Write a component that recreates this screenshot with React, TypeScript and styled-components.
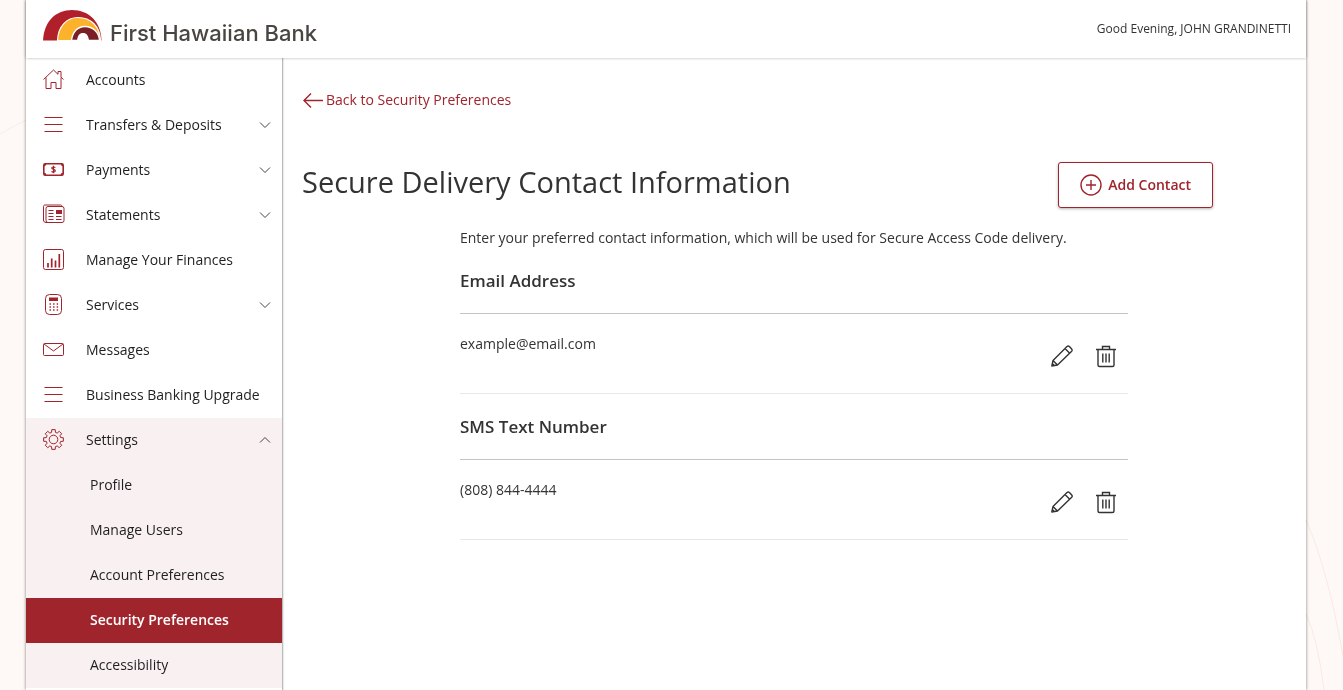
import React from "react";
import styled, { createGlobalStyle } from "styled-components";

const RED = "#a0242c";

const GlobalStyle = createGlobalStyle`
  *, *::before, *::after { box-sizing: border-box; }
  html, body, #root { height: 100%; }
  body {
    margin: 0;
    overflow: hidden;
    background: #fef9f6;
    color: #333;
    font-family: "Open Sans", "Noto Sans", sans-serif;
    font-size: 14px;
    line-height: 20px;
  }
  h1, h2, p, ul { margin: 0; padding: 0; }
  ul { list-style: none; }
  button { font: inherit; color: inherit; background: none; border: 0; padding: 0; cursor: pointer; }
  a { color: inherit; text-decoration: none; }
  svg { display: block; flex: none; }
`;

const Backdrop = styled.svg`
  position: fixed;
  bottom: 0;
  right: 0;
  z-index: -1;
`;

const BackdropLeft = styled(Backdrop)`
  top: 0;
  bottom: auto;
  left: 0;
  right: auto;
`;

const Page = styled.div`
  min-height: 100%;
  padding: 0 37px 0 26px;
  display: flex;
  justify-content: center;
`;

const Shell = styled.div`
  flex: 1;
  max-width: 1280px;
  min-height: 100vh;
  display: flex;
  flex-direction: column;
  background: #fff;
  box-shadow: 0 0 3px rgba(0, 0, 0, 0.5);
`;

const Header = styled.header`
  position: relative;
  height: 58px;
  padding: 0 15px 0 16px;
  display: flex;
  justify-content: space-between;
  align-items: center;
  background: #fff;
  box-shadow: 0 0 3px rgba(0, 0, 0, 0.3);
`;

const Brand = styled.a`
  padding-bottom: 8px;
  display: flex;
  align-items: center;
  gap: 6px;
  color: #4a4541;
  font: 500 22px/28px Inter, sans-serif;
`;

const BrandName = styled.span`
  padding-top: 16px;
`;

const Greeting = styled.span`
  font-size: 12px;
`;

const Body = styled.div`
  flex: 1;
  display: flex;
`;

const Sidebar = styled.nav`
  width: 257px;
  flex: none;
  border-right: 1px solid #bbb;
  box-shadow: 1px 0 1px rgba(0, 0, 0, 0.08);
  color: #1f1f1f;
`;

const SettingsGroup = styled.li`
  background: #f9f0f2;
`;

const NavLink = styled.a`
  height: 45px;
  padding: 0 9px 2px 16px;
  display: grid;
  grid-template-columns: 24px 1fr 16px;
  column-gap: 20px;
  align-items: center;
  white-space: nowrap;
`;

const NavText = styled.span`
  grid-column: 2 / 3;
`;

const SubLink = styled.a<{ $active?: boolean }>`
  height: 45px;
  padding: 0 0 2px 64px;
  display: flex;
  align-items: center;
  background: ${(p) => (p.$active ? RED : "transparent")};
  color: ${(p) => (p.$active ? "#fff" : "inherit")};
  font-weight: ${(p) => (p.$active ? 600 : 400)};
`;

const Main = styled.main`
  flex: 1;
  padding: 32px 20px 40px 19px;
`;

const BackLink = styled.a`
  display: flex;
  width: fit-content;
  align-items: center;
  gap: 2px;
  color: ${RED};
`;

const TitleRow = styled.div`
  margin: 52px 73px 20px 0;
  display: flex;
  justify-content: space-between;
  align-items: flex-start;
`;

const Title = styled.h1`
  font-size: 29px;
  line-height: 40px;
  font-weight: 400;
`;

const AddButton = styled.button`
  height: 46px;
  padding: 0 21px;
  display: flex;
  align-items: center;
  gap: 6px;
  border: 1px solid ${RED};
  border-radius: 3px;
  background: #fff;
  box-shadow: 0 1px 3px rgba(0, 0, 0, 0.3);
  color: ${RED};
  font-weight: 600;
`;

const Contacts = styled.div`
  max-width: 668px;
  margin: 0 auto;
`;

const SectionTitle = styled.h2`
  height: 66px;
  display: flex;
  align-items: center;
  border-bottom: 1px solid #c4c4c4;
  font-size: 17px;
  font-weight: 600;
`;

const ContactRow = styled.div`
  height: 80px;
  padding: 20px 10px 0 0;
  display: flex;
  justify-content: space-between;
  align-items: flex-start;
  border-bottom: 1px solid #e8e8e8;
`;

const Actions = styled.div`
  padding-top: 10px;
  display: flex;
  gap: 20px;
`;

type IconName =
  | "home" | "menu" | "payments" | "statements" | "finances"
  | "services" | "messages" | "settings";

const gearPath = (() => {
  const pts: string[] = [];
  const at = (r: number, deg: number) => {
    const a = (deg * Math.PI) / 180;
    return `${(11.5 + r * Math.cos(a)).toFixed(2)} ${(11.5 + r * Math.sin(a)).toFixed(2)}`;
  };
  for (let i = 0; i < 8; i++) {
    const c = i * 45 - 90;
    pts.push(at(7.4, c - 15), at(10, c - 10), at(10, c + 10), at(7.4, c + 15));
  }
  return `M${pts.join("L")}Z`;
})();

const drawings: Record<IconName, React.ReactNode> = {
  home: (
    <path d="M1.500 11.500 11.500 2l4.500 4.300V3.500h3v5.600l2.500 2.400M4 9.500V20.500h5v-6h5v6h5V9.500" />
  ),
  menu: <path d="M2.500 4.500h18M2.500 11.500h18M2.500 18.500h18" strokeWidth="1.200" />,
  payments: (
    <>
      <rect x="1.800" y="5.800" width="19.400" height="11.400" rx="1.500" strokeWidth="1.600" />
      <path d="M2 8.200a2.400 2.400 0 0 0 2.400-2.400H2zM21 8.200a2.400 2.400 0 0 1-2.400-2.400H21zM2 14.800a2.400 2.400 0 0 1 2.400 2.400H2zM21 14.800a2.400 2.400 0 0 0-2.400 2.400H21z" fill={RED} stroke="none" />
      <path d="M13.300 9.600c-.5-.8-3.600-1-3.600.5s3.600 1.100 3.600 2.700-3 1.500-3.800.6M11.500 7.800v7.400" strokeWidth="1.200" />
    </>
  ),
  statements: (
    <>
      <rect x="4" y="3.500" width="18" height="16" rx="2" />
      <path d="M20 3.500c0-1-.7-1.500-1.500-1.500H3c-1 0-1.500.6-1.500 1.500V17c0 1.500 1 2.500 2.500 2.500h2" />
      <path d="M6.500 7.500h5M6.500 10.500h5M6.500 13.500h5M6.500 16.500h5M14 13.500h5.500M14 16.500h5.500" />
      <rect x="14" y="7" width="6" height="4" fill={RED} stroke="none" />
    </>
  ),
  finances: (
    <>
      <rect x="1.500" y="1.500" width="20" height="20" rx="2" />
      <path d="M6 19.500V15M9.700 19.500v-9M13.500 19.500v-7M17.300 19.500V6" strokeWidth="1.700" />
    </>
  ),
  services: (
    <>
      <rect x="3.500" y="1.500" width="16" height="20" rx="4" />
      <rect x="7" y="4.500" width="9" height="3.500" fill={RED} stroke="none" />
      <path d="M7.500 11h9M7.500 14h9M7.500 17h9" strokeWidth="1.300" strokeDasharray="1.400 2.200" />
    </>
  ),
  messages: (
    <>
      <rect x="1.500" y="5.500" width="20" height="12" rx="1" />
      <path d="m2 6 9.500 7L21 6" />
    </>
  ),
  settings: (
    <>
      <path d={gearPath} strokeLinejoin="round" />
      <circle cx="11.500" cy="11.500" r="4.300" />
    </>
  ),
};

const NavIcon = ({ name }: { name: IconName }) => (
  <svg width="24" height="24" viewBox="0 0 24 24" fill="none" stroke={RED} aria-hidden="true">
    {drawings[name]}
  </svg>
);

const Chevron = ({ up }: { up?: boolean }) => (
  <svg width="16" height="16" viewBox="0 0 16 16" fill="none" stroke="#444" aria-hidden="true">
    <path d={up ? "m3 10.500 5-5 5 5" : "m3 5.500 5 5 5-5"} />
  </svg>
);

const Logo = () => (
  <svg width="62" height="34" viewBox="0 0 62 34" aria-hidden="true">
    <path d="M1 32.500C2 13 14 2 30 2c17 0 29 12 29.500 30.500Z" fill="#b01f2a" />
    <path d="M15.500 32.500C16 18 25 9.500 36 9.500c13 0 22 9 22.500 23Z" fill="#fdb22b" stroke="#fff" strokeWidth="1.200" />
    <path d="M29.500 32.500C30.500 24 35.500 18.500 43 18.500S57 24 57.500 32.500Z" fill="#7b1f26" stroke="#fff" strokeWidth="1.400" />
    <path d="M35 33c.5-5.500 2.500-8 6-8S46.500 27.500 47 33Z" fill="#fff" />
  </svg>
);

const Pencil = () => (
  <svg width="24" height="24" viewBox="0 0 24 24" fill="none" stroke="#333" strokeWidth="1.400" strokeLinejoin="round" aria-hidden="true">
    <path d="M1.800 22 3 16.500 17 2.500q1.200-1 2.400 0L21.700 5q1 1.200 0 2.300L7.500 21ZM15 4.500l4.700 4.700M3 16.500 7.500 21M2.500 19.700l1.600 1.600" />
  </svg>
);

const Trash = () => (
  <svg width="24" height="24" viewBox="0 0 24 24" fill="none" stroke="#333" strokeWidth="1.400" aria-hidden="true">
    <path d="M2 5.500h20M8.500 5.500v-3h7v3M4 5.500V21q0 1.500 1.500 1.500h13q1.500 0 1.500-1.500V5.500M8.800 9.500v9M12 9.500v9M15.200 9.500v9" />
  </svg>
);

const navItems: { icon: IconName; label: string; expandable?: boolean }[] = [
  { icon: "home", label: "Accounts" },
  { icon: "menu", label: "Transfers & Deposits", expandable: true },
  { icon: "payments", label: "Payments", expandable: true },
  { icon: "statements", label: "Statements", expandable: true },
  { icon: "finances", label: "Manage Your Finances" },
  { icon: "services", label: "Services", expandable: true },
  { icon: "messages", label: "Messages" },
  { icon: "menu", label: "Business Banking Upgrade" },
];

const settingsItems = [
  "Profile",
  "Manage Users",
  "Account Preferences",
  "Security Preferences",
  "Accessibility",
];

const contacts = [
  { title: "Email Address", value: "example@email.com" },
  { title: "SMS Text Number", value: "(808) 844-4444" },
];

export default function App() {
  return (
    <>
      <GlobalStyle />
      <BackdropLeft width="26" height="140" fill="none" stroke="#f9ece5" aria-hidden="true">
        <path d="M0 134Q12 127 26 120" />
      </BackdropLeft>
      <Backdrop width="37" height="180" fill="none" stroke="#fae9e0" aria-hidden="true">
        <path d="M0 10Q22 60 37 146M0 104Q12 130 18 180" />
      </Backdrop>
      <Page>
        <Shell>
          <Header>
            <Brand href="#home">
              <Logo />
              <BrandName>First Hawaiian Bank</BrandName>
            </Brand>
            <Greeting>Good Evening, JOHN GRANDINETTI</Greeting>
          </Header>
          <Body>
            <Sidebar aria-label="Main">
              <ul>
                {navItems.map((item) => (
                  <li key={item.label}>
                    <NavLink href="#">
                      <NavIcon name={item.icon} />
                      <NavText>{item.label}</NavText>
                      {item.expandable && <Chevron />}
                    </NavLink>
                  </li>
                ))}
                <SettingsGroup>
                  <NavLink href="#" aria-expanded="true">
                    <NavIcon name="settings" />
                    <NavText>Settings</NavText>
                    <Chevron up />
                  </NavLink>
                  <ul>
                    {settingsItems.map((label) => (
                      <li key={label}>
                        <SubLink href="#" $active={label === "Security Preferences"}>
                          {label}
                        </SubLink>
                      </li>
                    ))}
                  </ul>
                </SettingsGroup>
              </ul>
            </Sidebar>
            <Main>
              <BackLink href="#">
                <svg width="22" height="20" viewBox="0 0 22 20" fill="none" stroke={RED} strokeWidth="1.400" aria-hidden="true">
                  <path d="M21 10.500H2M9 3.500l-7 7 7 7" />
                </svg>
                Back to Security Preferences
              </BackLink>
              <TitleRow>
                <Title>Secure Delivery Contact Information</Title>
                <AddButton type="button">
                  <svg width="22" height="22" viewBox="0 0 22 22" fill="none" stroke={RED} strokeWidth="1.400" aria-hidden="true">
                    <circle cx="11" cy="11" r="10" />
                    <path d="M11 6v10M6 11h10" />
                  </svg>
                  Add Contact
                </AddButton>
              </TitleRow>
              <Contacts>
                <p>Enter your preferred contact information, which will be used for Secure Access Code delivery.</p>
                {contacts.map((c) => (
                  <section key={c.title}>
                    <SectionTitle>{c.title}</SectionTitle>
                    <ContactRow>
                      <span>{c.value}</span>
                      <Actions>
                        <button type="button" aria-label={`Edit ${c.title}`}><Pencil /></button>
                        <button type="button" aria-label={`Delete ${c.title}`}><Trash /></button>
                      </Actions>
                    </ContactRow>
                  </section>
                ))}
              </Contacts>
            </Main>
          </Body>
        </Shell>
      </Page>
    </>
  );
}
